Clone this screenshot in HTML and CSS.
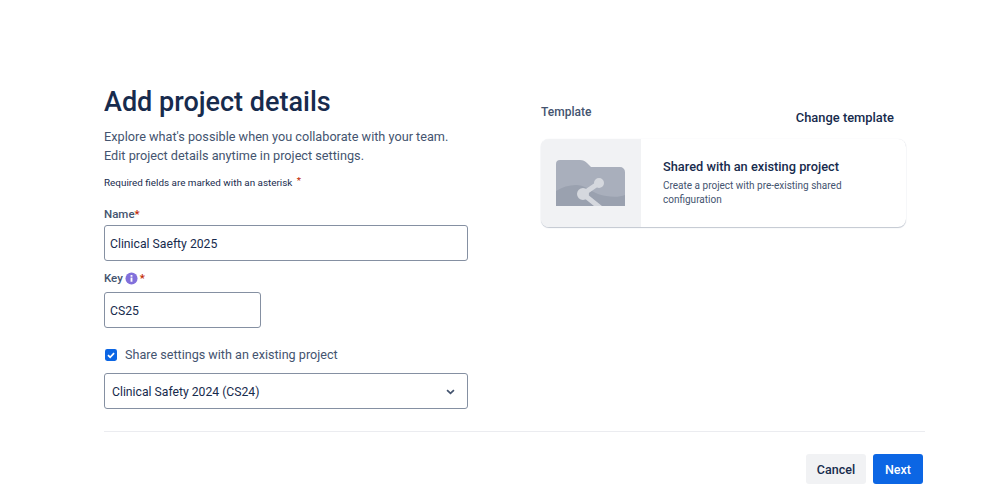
FILE: index.html
```html
<!DOCTYPE html>
<html lang="en">
<head>
  <meta charset="UTF-8" />
  <meta name="viewport" content="width=device-width, initial-scale=1.0"/>
  <title>Add project details</title>
  <link rel="stylesheet" href="styles.css">
</head>
<body>
  <div class="page">
    <div class="columns">
      <form class="details">
        <h1>Add project details</h1>
        <p class="intro">Explore what's possible when you collaborate with your team.<br>Edit project details anytime in project settings.</p>
        <p class="required-note">Required fields are marked with an asterisk <span class="star note-star">*</span></p>

        <div class="label">Name<span class="star">*</span></div>
        <div class="field">Clinical Saefty 2025</div>

        <div class="label label-key">Key
          <svg class="info" viewBox="0 0 14 14" width="13" height="13">
            <circle cx="7" cy="7" r="6.5" fill="#8270db"/>
            <rect x="6" y="6" width="2" height="4.5" fill="#fff"/>
            <rect x="6" y="3.3" width="2" height="1.8" fill="#fff"/>
          </svg><span class="star">*</span>
        </div>
        <div class="field field-key">CS25</div>

        <div class="share">
          <svg class="check" viewBox="0 0 14 14" width="12" height="12">
            <rect width="14" height="14" rx="2.5" fill="#0c66e4"/>
            <path d="M3.5 7.2 6 9.7 10.6 4.8" fill="none" stroke="#fff" stroke-width="2"/>
          </svg>
          <span>Share settings with an existing project</span>
        </div>

        <div class="field select">
          <span>Clinical Safety 2024 (CS24)</span>
          <svg viewBox="0 0 10 7" width="9" height="6">
            <path d="M1 1.2 5 5 9 1.2" fill="none" stroke="#44546f" stroke-width="2"/>
          </svg>
        </div>
      </form>

      <section class="template">
        <div class="template-head">
          <span class="template-title">Template</span>
          <a class="change">Change template</a>
        </div>
        <div class="card">
          <div class="card-art">
            <svg viewBox="0 0 69 46" width="69" height="46">
              <path d="M0 4a4 4 0 0 1 4-4h20c3 0 5 1 7 3l4 4h29a5 5 0 0 1 5 5v34H0z" fill="#a9afbc"/>
              <path d="M0 31c6-4 13-6 20-6 8 0 13 5 22 9 9 3 20 4 27 1v11H0z" fill="#9aa1af"/>
              <g stroke="#d5d8de" stroke-width="5" fill="#d5d8de">
                <path d="M43 23 27 34 47 50" fill="none"/>
                <circle cx="43" cy="23" r="2.5"/>
                <circle cx="27" cy="34" r="3.5"/>
              </g>
            </svg>
          </div>
          <div class="card-text">
            <h2>Shared with an existing project</h2>
            <p>Create a project with pre-existing shared configuration</p>
          </div>
        </div>
      </section>
    </div>

    <div class="footer">
      <button class="btn">Cancel</button>
      <button class="btn primary">Next</button>
    </div>
  </div>
</body>
</html>
```

FILE: styles.css
```css
body {
  margin: 0;
  font-family: Roboto, "Noto Sans", sans-serif;
  color: #172b4d;
  background: #fff;
}

.page {
  width: 821px;
  height: 497px;
  margin-left: 104px;
  overflow: hidden;
}

.columns {
  display: flex;
  gap: 73px;
  height: 432px;
  padding-top: 84px;
  box-sizing: border-box;
  border-bottom: 1px solid #ebecf0;
}

.details {
  width: 364px;
}

h1 {
  margin: 1px 0 0;
  font-size: 27px;
  line-height: 34px;
  font-weight: 500;
  color: #172b4d;
}

.intro {
  margin: 8px 0 0;
  font-size: 12.7px;
  line-height: 19px;
  color: #44546f;
}

.required-note {
  margin: 8px 0 0;
  font-size: 9.9px;
  line-height: 16px;
}

.star {
  color: #bf2600;
}

.note-star {
  margin-left: 2px;
  vertical-align: 2px;
}

.label {
  margin-top: 15px;
  font-size: 11.5px;
  line-height: 16px;
  font-weight: 500;
  color: #44546f;
}

.label-key {
  display: flex;
  align-items: center;
  gap: 2px;
  margin-top: 9px;
}

.field {
  display: flex;
  align-items: center;
  box-sizing: border-box;
  height: 36px;
  margin-top: 3px;
  padding: 1px 5px 0;
  font-size: 12.2px;
  border: 1px solid #8590a2;
  border-radius: 3px;
}

.field-key {
  width: 157px;
  margin-top: 6px;
}

.share {
  display: flex;
  align-items: center;
  gap: 8px;
  margin-top: 17px;
  font-size: 12.6px;
  line-height: 20px;
  color: #44546f;
  padding-left: 1px;
}

.select {
  justify-content: space-between;
  margin-top: 8px;
  padding: 1px 12px 0 7px;
}

.template {
  width: 365px;
}

.template-head {
  display: flex;
  justify-content: space-between;
  height: 55px;
  font-size: 12px;
  padding-top: 20px;
  box-sizing: border-box;
}

.template-title {
  font-weight: 500;
  color: #44546f;
  line-height: 16px;
}

.change {
  margin: 6px 12px 0 0;
  font-size: 12.9px;
  font-weight: 500;
  line-height: 16px;
}

.card {
  display: flex;
  height: 88px;
  border-radius: 8px;
  box-shadow: 0 1px 1px #c1c7d0, 0 0 1px #dfe1e6;
  overflow: hidden;
}

.card-art {
  display: flex;
  align-items: center;
  box-sizing: border-box;
  flex: 0 0 100px;
  padding-left: 15px;
  background: #f1f2f4;
}

.card-text {
  padding: 19px 22px;
}

h2 {
  margin: 0;
  font-size: 12.8px;
  line-height: 18px;
  font-weight: 500;
}

.card-text p {
  margin: 3px 0 0;
  font-size: 10px;
  line-height: 14px;
  color: #44546f;
}

.footer {
  display: flex;
  justify-content: flex-end;
  gap: 7px;
  padding: 22px 2px 0 0;
}

.btn {
  height: 30px;
  width: 60px;
  padding: 0;
  font: 500 12.5px Roboto, "Noto Sans", sans-serif;
  color: #172b4d;
  background: #f1f2f4;
  border: 0;
  border-radius: 3px;
}

.primary {
  width: 50px;
  color: #fff;
  background: #0c66e4;
}
```
